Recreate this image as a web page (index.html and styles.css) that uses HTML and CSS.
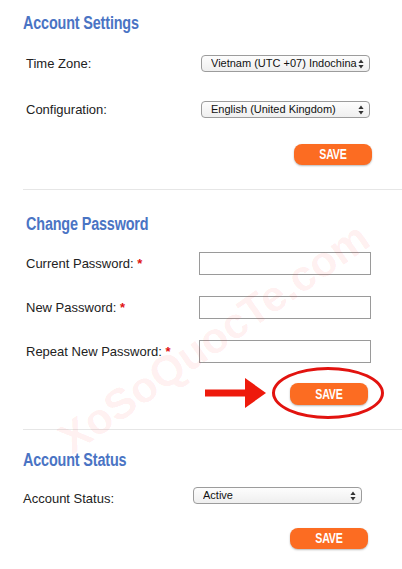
FILE: index.html
```html
<!DOCTYPE html>
<html lang="en">
<head>
<meta charset="utf-8">
<title>Account</title>
<link rel="stylesheet" href="styles.css">
</head>
<body>
<main class="page">
  <section class="panel panel-settings">
    <h2 class="panel-title"><span class="narrow">Account Settings</span></h2>
    <div class="form-grid">
      <label class="field-label">Time Zone:</label>
      <select class="select"><option>Vietnam (UTC +07) Indochina</option></select>
      <label class="field-label">Configuration:</label>
      <select class="select"><option>English (United Kingdom)</option></select>
    </div>
    <div class="actions actions-settings">
      <button class="btn-save" type="button"><span class="narrow">SAVE</span></button>
    </div>
  </section>

  <section class="panel panel-password">
    <h2 class="panel-title"><span class="narrow">Change Password</span></h2>
    <div class="form-grid">
      <label class="field-label">Current Password: <span class="req">*</span></label>
      <input class="text-input" type="password">
      <label class="field-label">New Password: <span class="req">*</span></label>
      <input class="text-input" type="password">
      <label class="field-label">Repeat New Password: <span class="req">*</span></label>
      <input class="text-input" type="password">
    </div>
    <div class="actions actions-password">
      <svg class="arrow" width="61" height="30" viewBox="0 0 61 30" aria-hidden="true">
        <rect x="0" y="11.5" width="42" height="7" fill="#ee1a0c"/>
        <polygon points="40,0 61,15 40,30" fill="#ee1a0c"/>
      </svg>
      <div class="highlight">
        <button class="btn-save" type="button"><span class="narrow">SAVE</span></button>
      </div>
    </div>
  </section>

  <section class="panel panel-status">
    <h2 class="panel-title"><span class="narrow">Account Status</span></h2>
    <div class="form-grid">
      <label class="field-label">Account Status:</label>
      <select class="select"><option>Active</option></select>
    </div>
    <div class="actions actions-status">
      <button class="btn-save" type="button"><span class="narrow">SAVE</span></button>
    </div>
  </section>

  <div class="watermark" aria-hidden="true">XoSoQuocTe.com</div>
</main>
</body>
</html>
```

FILE: styles.css
```css
html, body {
  margin: 0;
  padding: 0;
  background: #ffffff;
}

body {
  font-family: "Liberation Sans", Arial, Helvetica, sans-serif;
  font-size: 13px;
  color: #222222;
}

.page {
  position: relative;
  width: 402px;
  height: 569px;
  overflow: hidden;
}

.panel {
  margin-left: 23px;
  border-bottom: 1px solid #e6e6e6;
}

.narrow {
  display: inline-block;
  transform: scaleX(0.8);
  transform-origin: left center;
  white-space: nowrap;
}

.panel-title {
  margin: 0;
  font-family: "Liberation Sans", Arial, sans-serif;
  font-weight: bold;
  font-size: 18px;
  line-height: 24px;
  color: #4a74c4;
  letter-spacing: -0.2px;
}

.form-grid {
  display: grid;
  align-items: center;
}

.field-label {
  font-size: 13px;
  line-height: 16px;
  color: #222222;
}

.req {
  color: #e01010;
  font-weight: bold;
}

.select {
  -webkit-appearance: none;
  appearance: none;
  box-sizing: border-box;
  height: 17px;
  margin: 0;
  padding: 0 8px 0 9px;
  border: 1px solid #9c9c9c;
  border-radius: 4px;
  font-family: "Liberation Sans", Arial, sans-serif;
  font-size: 11px;
  line-height: 15px;
  color: #111111;
  background-color: #f6f6f6;
  background-image: url("data:image/svg+xml;utf8,<svg xmlns='http://www.w3.org/2000/svg' width='6' height='10' viewBox='0 0 6 10'><path d='M3 0.5L5.6 4H0.4z M3 9.5L0.4 6h5.2z' fill='%23333'/></svg>"), linear-gradient(#fdfdfd, #efefef);
  background-repeat: no-repeat, no-repeat;
  background-position: right 5px center, 0 0;
  background-size: 6px 10px, 100% 100%;
}

.text-input {
  box-sizing: border-box;
  height: 23px;
  margin: 0;
  padding: 0 4px;
  border: 1px solid #9a9a9a;
  border-radius: 0;
  background: transparent;
  font-size: 13px;
}

.actions {
  display: flex;
  justify-content: flex-end;
  align-items: center;
}

.btn-save {
  box-sizing: border-box;
  width: 78px;
  height: 21px;
  margin: 0;
  padding: 0;
  border: none;
  border-radius: 8px;
  background: #fc6c22;
  box-shadow: 0 1px 2px rgba(0, 0, 0, 0.28);
  color: #ffffff;
  font-family: "Liberation Sans", Arial, sans-serif;
  font-weight: bold;
  font-size: 14px;
  line-height: 21px;
  letter-spacing: -0.3px;
  text-align: center;
}

.btn-save .narrow {
  transform: scaleX(0.76);
  transform-origin: center center;
}

/* Section 1 */
.panel-settings {
  padding-top: 11px;
  padding-bottom: 24px;
}
.panel-settings .form-grid {
  margin-top: 20px;
  grid-template-columns: 178px 169px;
  grid-auto-rows: 17px;
  row-gap: 29px;
}
.panel-settings .field-label {
  padding-left: 3px;
}
.actions-settings {
  width: 349px;
  margin-top: 26px;
}

/* Section 2 */
.panel-password {
  padding-top: 22px;
  padding-bottom: 10px;
}
.panel-password .panel-title {
  padding-left: 3px;
}
.panel-password .form-grid {
  margin-top: 16px;
  grid-template-columns: 176px 172px;
  grid-auto-rows: 23px;
  row-gap: 21px;
}
.panel-password .field-label {
  padding-left: 3px;
}
.actions-password {
  width: 361px;
  margin-top: 4px;
  gap: 6px;
}
.arrow {
  display: block;
  flex: none;
}
.highlight {
  box-sizing: border-box;
  width: 112px;
  height: 52px;
  border: 3px solid #e2130f;
  border-radius: 50%;
  display: flex;
  align-items: center;
  justify-content: center;
  padding-left: 2px;
  padding-top: 1px;
}
.highlight .btn-save {
  height: 22px;
  line-height: 22px;
}

/* Section 3 */
.panel-status {
  padding-top: 18px;
  padding-bottom: 20px;
  border-bottom: none;
}
.panel-status .form-grid {
  margin-top: 15px;
  grid-template-columns: 170px 169px;
  grid-auto-rows: 17px;
}
.panel-status .field-label {
  padding-top: 6px;
}
.actions-status {
  width: 345px;
  margin-top: 24px;
}

/* Watermark overlay */
.watermark {
  position: absolute;
  left: 214px;
  top: 338px;
  transform: translate(-50%, -50%) rotate(-35deg);
  white-space: nowrap;
  font-family: "Liberation Sans", Arial, sans-serif;
  font-weight: bold;
  font-size: 43px;
  line-height: 43px;
  color: rgba(255, 40, 40, 0.08);
  pointer-events: none;
}
```
